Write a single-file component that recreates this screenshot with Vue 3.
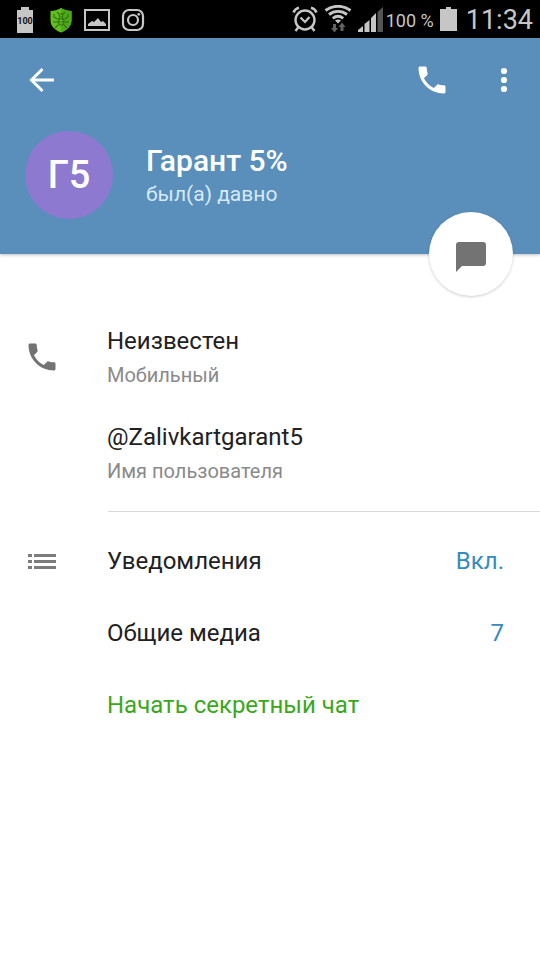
<script setup>
const details = [
  { value: 'Неизвестен', label: 'Мобильный', icon: true },
  { value: '@Zalivkartgarant5', label: 'Имя пользователя', icon: false }
]
const settings = [
  { title: 'Уведомления', value: 'Вкл.', icon: true },
  { title: 'Общие медиа', value: '7', icon: false }
]
const phonePath =
  'M6.62 10.79c1.44 2.83 3.76 5.14 6.59 6.59l2.2-2.2c.27-.27.67-.36 1.02-.24 1.12.37 2.33.57 3.57.57.55 0 1 .45 1 1V20c0 .55-.45 1-1 1-9.39 0-17-7.61-17-17 0-.55.45-1 1-1h3.5c.55 0 1 .45 1 1 0 1.25.2 2.45.57 3.57.11.35.03.74-.25 1.02l-2.2 2.2z'
</script>

<template>
  <div class="screen">
    <div class="status">
      <div class="status-left">
        <span class="charge">
          <svg width="16" height="26" viewBox="0 0 16 26" aria-hidden="true">
            <path d="M4 0h8v3h4v23H0V3h4z" fill="#c6c6c6" />
          </svg>
          <span class="charge-text">100</span>
        </span>
        <svg width="24" height="26" viewBox="0 0 24 26" aria-hidden="true">
          <path d="M12 1c3 2 7 3 10.500 3v9c0 6-4 10-10.500 12.500C5.500 23 1.500 19 1.500 13V4C5 4 9 3 12 1z" fill="#62bf22" />
          <path d="M12 1c3 2 7 3 10.500 3v9c0 6-4 10-10.500 12.500z" fill="#4ea818" />
          <ellipse cx="12" cy="14.500" rx="3.600" ry="4.600" fill="#2f7010" />
          <g fill="none" stroke="#2f7010" stroke-width="1.100">
            <circle cx="12" cy="8.500" r="1.800" />
            <path d="M8.500 12 5 10V7M15.500 12l3.500-2V7M8 15H4M16 15h4M9 18l-3 3M15 18l3 3M10 7 8 5M14 7l2-2" />
          </g>
          <path d="M12 10v9M9.500 13.500h5M9.500 16h5" stroke="#65bd2c" stroke-width="1" />
        </svg>
        <svg width="26" height="22" viewBox="0 0 26 22" aria-hidden="true">
          <rect x="1" y="1" width="24" height="20" fill="none" stroke="#c6c6c6" stroke-width="2" />
          <path d="M4 17v-2l4-3 2 1 4-4 3 4 2-1 3 3v2z" fill="#c6c6c6" />
        </svg>
        <svg width="24" height="24" viewBox="0 0 24 24" aria-hidden="true">
          <rect x="2" y="2" width="20" height="20" rx="6" fill="none" stroke="#c6c6c6" stroke-width="2.200" />
          <circle cx="12" cy="12" r="5" fill="none" stroke="#c6c6c6" stroke-width="2.200" />
          <circle cx="17.800" cy="6.300" r="1.400" fill="#c6c6c6" />
        </svg>
      </div>
      <div class="status-right">
        <svg width="26" height="26" viewBox="0 0 26 26" aria-hidden="true">
          <g fill="none" stroke="#c6c6c6">
            <circle cx="13" cy="14" r="9.500" stroke-width="2.400" />
            <path d="M8.500 11.500 13 16l4.500-5" stroke-width="2.200" />
            <path d="M1.500 6.500C2.500 4 4 2.500 7 1.800M24.500 6.500C23.500 4 22 2.500 19 1.800" stroke-width="2.600" />
            <path d="m6.500 21-3 4M19.500 21l3 4" stroke-width="2.400" />
          </g>
        </svg>
        <svg width="28" height="28" viewBox="0 0 28 28" aria-hidden="true">
          <g fill="none" stroke="#c6c6c6" stroke-width="2.900">
            <path d="M1.500 5.500c7-5.600 18-5.600 25 0" />
            <path d="M5 9.500c5.200-4.200 12.800-4.200 18 0" />
            <path d="M8.800 13.300c3.200-2.400 7.200-2.400 10.400 0" />
          </g>
          <path d="M11 15.500c2-1.500 4-1.500 6 0l-3 3z" fill="#c6c6c6" />
          <path d="M9 19h3v4h2l-3.500 4.500L7 23h2zM16.500 26h3v-4h2L18 17.500 14.500 22h2z" fill="#626262" />
        </svg>
        <svg width="25" height="25" viewBox="0 0 25 25" aria-hidden="true">
          <path d="M0 25v-2l5-4v6zM6.500 25v-8l5-4v12zM13 25V11l5-5v19z" fill="#c6c6c6" />
          <path d="M19.500 25V5L25 0v25z" fill="#555" />
        </svg>
        <span class="percent">100 %</span>
        <svg width="17" height="24" viewBox="0 0 17 24" aria-hidden="true">
          <path d="M6 0h5v2h6v22H0V2h6z" fill="#c6c6c6" />
        </svg>
        <time class="clock">11:34</time>
      </div>
    </div>

    <header class="header">
      <div class="toolbar">
        <button class="tool" type="button" aria-label="Назад">
          <svg width="36" height="36" viewBox="0 0 36 36" aria-hidden="true">
            <path d="M30 18H8M18.500 7 7.500 18l11 11" fill="none" stroke="#fff" stroke-width="3" />
          </svg>
        </button>
        <span class="spacer"></span>
        <button class="tool" type="button" aria-label="Позвонить">
          <svg width="36" height="36" viewBox="0 0 24 24" aria-hidden="true"><path :d="phonePath" fill="#fff" /></svg>
        </button>
        <button class="tool" type="button" aria-label="Меню">
          <svg width="36" height="36" viewBox="0 0 36 36" aria-hidden="true">
            <g fill="#fff"><circle cx="18" cy="9" r="3.100" /><circle cx="18" cy="18" r="3.100" /><circle cx="18" cy="27" r="3.100" /></g>
          </svg>
        </button>
      </div>
      <div class="profile">
        <div class="avatar">Г5</div>
        <div class="who">
          <h1 class="name">Гарант 5%</h1>
          <p class="seen">был(а) давно</p>
        </div>
      </div>
      <button class="fab" type="button" aria-label="Написать">
        <svg width="30" height="30" viewBox="0 0 30 30" aria-hidden="true">
          <path d="M3 0h24a3 3 0 0 1 3 3v18a3 3 0 0 1-3 3H6l-6 6V3a3 3 0 0 1 3-3z" fill="#737373" />
        </svg>
      </button>
    </header>

    <main class="content">
      <section class="details">
        <div v-for="d in details" :key="d.label" class="row detail">
          <span class="lead">
            <svg v-if="d.icon" width="36" height="36" viewBox="0 0 24 24" aria-hidden="true"><path :d="phonePath" fill="#737373" /></svg>
          </span>
          <div class="detail-text">
            <p class="text">{{ d.value }}</p>
            <p class="label">{{ d.label }}</p>
          </div>
        </div>
      </section>
      <section class="settings">
        <button v-for="s in settings" :key="s.title" type="button" class="row option">
          <span class="lead">
            <svg v-if="s.icon" width="36" height="36" viewBox="0 0 36 36" aria-hidden="true">
              <path d="M4 11h4v3H4zM10 11h22v3H10zM4 17h4v3H4zM10 17h22v3H10zM4 23h4v3H4zM10 23h22v3H10z" fill="#7c7c7c" />
            </svg>
          </span>
          <span class="text">{{ s.title }}</span>
          <span class="text value">{{ s.value }}</span>
        </button>
        <button type="button" class="row option">
          <span class="lead"></span>
          <span class="text secret">Начать секретный чат</span>
        </button>
      </section>
    </main>
  </div>
</template>

<style>
body {
  margin: 0;
  background: #fff;
}
</style>

<style scoped>
.screen {
  font-family: Roboto, "Noto Sans", sans-serif;
  color: #212121;
}
svg {
  display: block;
  flex: none;
}
p,
h1 {
  margin: 0;
}
button {
  margin: 0;
  padding: 0;
  border: 0;
  background: none;
  font: inherit;
  color: inherit;
  text-align: left;
  cursor: pointer;
}
.status {
  display: flex;
  justify-content: space-between;
  height: 38px;
  padding: 0 7px 0 17px;
  background: #000;
  color: #c6c6c6;
}
.status-left,
.status-right {
  display: flex;
  align-items: center;
}
.status-left {
  gap: 11px;
  padding-top: 2px;
}
.status-right {
  gap: 6px;
}
.charge {
  position: relative;
  margin-right: 5px;
}
.charge-text {
  position: absolute;
  inset: 8px 0 auto;
  display: flex;
  justify-content: center;
  font-size: 9px;
  line-height: 12px;
  font-weight: 700;
  color: #111;
}
.percent {
  font-size: 18px;
  line-height: 24px;
  padding-top: 4px;
  margin-left: -3px;
}
.clock {
  font-size: 27px;
  line-height: 32px;
  padding-top: 2px;
  padding-left: 3px;
}
.header {
  position: relative;
  background: #598fba;
  color: #fff;
  padding-bottom: 34px;
  box-shadow: 0 1px 3px rgba(0, 0, 0, 0.25);
}
.toolbar {
  display: flex;
  align-items: center;
  height: 84px;
  padding-left: 6px;
}
.tool {
  display: grid;
  place-items: center;
  width: 72px;
  height: 72px;
}
.spacer {
  flex: 1;
}
.profile {
  display: flex;
  align-items: center;
  gap: 33px;
  padding: 9px 120px 1px 25px;
}
.avatar {
  display: grid;
  place-items: center;
  flex: none;
  width: 88px;
  height: 88px;
  border-radius: 50%;
  background: #8e79d1;
  font-size: 38px;
  font-weight: 500;
}
.who {
  padding-top: 2px;
}
.name {
  font-size: 30px;
  line-height: 36px;
  font-weight: 500;
}
.seen {
  font-size: 21px;
  line-height: 30px;
  color: #d7eafa;
}
.fab {
  position: absolute;
  right: 27px;
  bottom: -42px;
  display: grid;
  place-items: center;
  width: 84px;
  height: 84px;
  padding-top: 6px;
  border-radius: 50%;
  background: #fff;
  box-shadow: 0 1px 3px rgba(0, 0, 0, 0.2);
}
.content {
  padding-top: 55px;
}
.row {
  display: flex;
  align-items: center;
  width: 100%;
  box-sizing: border-box;
  padding-left: 24px;
  padding-right: 36px;
}
.lead {
  flex: none;
  width: 83px;
}
.detail {
  padding-top: 16px;
  padding-bottom: 16px;
}
.detail-text {
  display: grid;
  gap: 4px;
}
.text {
  font-size: 24px;
  line-height: 32px;
}
.label {
  font-size: 20px;
  line-height: 28px;
  color: #8a8a8a;
}
.details {
  padding-bottom: 10px;
}
.settings {
  padding-top: 14px;
  background: linear-gradient(#d9d9d9, #d9d9d9) 108px 0 / 100% 1px no-repeat;
}
.option {
  height: 72px;
}
.value {
  margin-left: auto;
  color: #348bc1;
}
.secret {
  color: #3ba81c;
}
</style>
